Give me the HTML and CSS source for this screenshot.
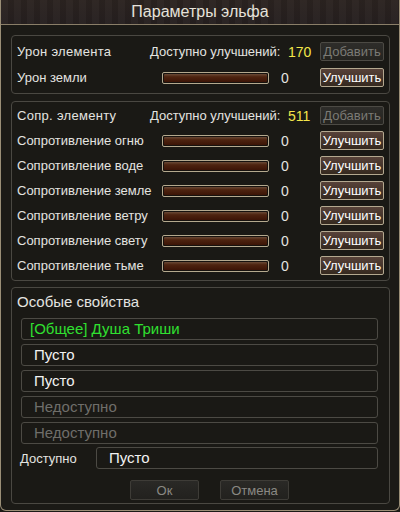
FILE: index.html
```html
<!DOCTYPE html>
<html lang="ru">
  <head>
    <meta charset="UTF-8" />
    <meta name="viewport" content="width=device-width, initial-scale=1.0" />
    <title>Параметры эльфа</title>
    <link rel="stylesheet" href="styles.css">
  </head>
  <body>
    <div class="window">
      <div class="titlebar">Параметры эльфа</div>

      <div class="content">
        <!-- Урон -->
        <div class="panel panel-attack">
          <div class="row head">
            <span class="label">Урон элемента</span>
            <span class="avail">Доступно улучшений:</span>
            <span class="points">170</span>
            <button class="btn btn-off">Добавить</button>
          </div>
          <div class="row">
            <span class="label">Урон земли</span>
            <span class="bar"></span>
            <span class="val">0</span>
            <button class="btn">Улучшить</button>
          </div>
        </div>

        <!-- Сопротивления -->
        <div class="panel panel-defense">
          <div class="row head">
            <span class="label">Сопр. элементу</span>
            <span class="avail">Доступно улучшений:</span>
            <span class="points">511</span>
            <button class="btn btn-off">Добавить</button>
          </div>
          <div class="row">
            <span class="label">Сопротивление огню</span>
            <span class="bar"></span>
            <span class="val">0</span>
            <button class="btn">Улучшить</button>
          </div>
          <div class="row">
            <span class="label">Сопротивление воде</span>
            <span class="bar"></span>
            <span class="val">0</span>
            <button class="btn">Улучшить</button>
          </div>
          <div class="row">
            <span class="label">Сопротивление земле</span>
            <span class="bar"></span>
            <span class="val">0</span>
            <button class="btn">Улучшить</button>
          </div>
          <div class="row">
            <span class="label">Сопротивление ветру</span>
            <span class="bar"></span>
            <span class="val">0</span>
            <button class="btn">Улучшить</button>
          </div>
          <div class="row">
            <span class="label">Сопротивление свету</span>
            <span class="bar"></span>
            <span class="val">0</span>
            <button class="btn">Улучшить</button>
          </div>
          <div class="row">
            <span class="label">Сопротивление тьме</span>
            <span class="bar"></span>
            <span class="val">0</span>
            <button class="btn">Улучшить</button>
          </div>
        </div>

        <!-- Особые свойства -->
        <div class="panel panel-special">
          <div class="special-title">Особые свойства</div>
          <div class="slots">
            <div class="slot slot-green">[Общее] Душа Триши</div>
            <div class="slot">Пусто</div>
            <div class="slot">Пусто</div>
            <div class="slot slot-off">Недоступно</div>
            <div class="slot slot-off">Недоступно</div>
          </div>
          <div class="avail-row">
            <span class="avail-label">Доступно</span>
            <div class="slot slot-wide">Пусто</div>
          </div>
          <div class="actions">
            <button class="btn-dark">Ок</button>
            <button class="btn-dark">Отмена</button>
          </div>
        </div>
      </div>
    </div>
  </body>
</html>
```

FILE: styles.css
```css
* {
  box-sizing: border-box;
  margin: 0;
  padding: 0;
}

body {
  background: #1b1a16;
  font-family: "Liberation Sans", Arial, sans-serif;
  color: #e4e4e0;
  width: 400px;
  height: 512px;
  overflow: hidden;
}

.window {
  width: 400px;
  height: 511px;
  border: 1px solid #9a8e76;
  border-top: none;
  border-radius: 0 0 6px 6px;
  background: #1b1a16;
}

.titlebar {
  height: 25px;
  line-height: 24px;
  text-align: center;
  font-size: 16px;
  color: #e6e2da;
  background: repeating-linear-gradient(
      90deg,
      rgba(255, 255, 255, 0.02) 0 7px,
      rgba(0, 0, 0, 0.06) 7px 13px
    ),
    linear-gradient(#2c2421, #262020);
  border-bottom: 1px solid #8a7e68;
}

.content {
  padding: 10px 9px 0 10px;
  display: flex;
  flex-direction: column;
  gap: 7px;
}

.panel {
  border: 1px solid #4a4842;
  border-radius: 4px;
  background: #1a1915;
}

.panel-attack {
  padding: 6px 5px;
  display: flex;
  flex-direction: column;
  gap: 7px;
}

.panel-defense {
  padding: 4px 5px 5px;
  display: flex;
  flex-direction: column;
  gap: 6px;
}

.panel-special {
  margin-top: -1px;
  height: 217px;
  padding: 5px 11px 2px 9px;
}

.row {
  display: grid;
  grid-template-columns: 145px 107px 12px 39px 64px;
  align-items: center;
  height: 19px;
  font-size: 13px;
}

.row .bar {
  grid-column: 2;
}

.row .val {
  grid-column: 4;
}

.row.head {
  grid-template-columns: 133px 138px 32px 64px;
}

.label,
.avail {
  white-space: nowrap;
}

.row.head .label {
  letter-spacing: 0.3px;
}

.points {
  color: #f3e64a;
  font-size: 14px;
}

.val {
  font-size: 14px;
}

.bar {
  height: 12px;
  border: 1px solid #b4a98e;
  border-radius: 2px;
  padding: 1px;
  background: #17120e;
}

.bar::after {
  content: "";
  display: block;
  height: 100%;
  border-radius: 1px;
  background: linear-gradient(#6a4a36 0, #4e2410 35%, #3c1406 100%);
}

.btn {
  height: 19px;
  font-family: inherit;
  font-size: 13px;
  color: #ffffff;
  border: 1px solid #b3a88f;
  border-radius: 2px;
  background: linear-gradient(#574239, #35291f);
}

.btn-off {
  color: #7b7a75;
  border-color: #4c4a44;
  background: linear-gradient(#2e2d2a, #252420);
}

.special-title {
  height: 18px;
  line-height: 18px;
  font-size: 15px;
  margin-left: -4px;
}

.slots {
  margin-top: 7px;
  display: flex;
  flex-direction: column;
  gap: 4px;
}

.slot {
  height: 22px;
  line-height: 20px;
  border: 1px solid #4c4a44;
  border-radius: 3px;
  padding-left: 12px;
  font-size: 15px;
  color: #f2f2f2;
}

.slot-green {
  padding-left: 8px;
  color: #30e030;
}

.slot-off {
  color: #6f6e6a;
}

.avail-row {
  margin-top: 3px;
  display: flex;
  align-items: center;
}

.avail-label {
  width: 75px;
  margin-left: -1px;
  font-size: 13px;
}

.slot-wide {
  flex: 1;
  margin-left: 1px;
}

.actions {
  margin-top: 11px;
  padding-left: 109px;
  display: flex;
  gap: 21px;
}

.btn-dark {
  width: 69px;
  height: 20px;
  font-family: inherit;
  font-size: 13px;
  color: #8a8984;
  border: 1px solid #3e3c37;
  border-radius: 2px;
  background: linear-gradient(#2a2926, #22211e);
}
```
